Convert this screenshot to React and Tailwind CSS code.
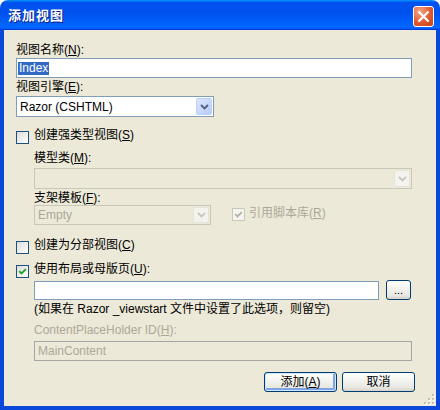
import React from 'react';

// 添加视图 dialog, Windows XP (Luna) look

const Mn = ({ children }) => <span className="underline underline-offset-[1px]">{children}</span>;

const Checkbox = ({ checked, disabled }) => (
  <span
    className={
      disabled
        ? 'mt-[3px] flex h-[13px] w-[13px] shrink-0 items-center justify-center border border-[#CAC8BB] bg-[#F5F4EE]'
        : 'mt-[3px] flex h-[13px] w-[13px] shrink-0 items-center justify-center border border-[#1C5180] bg-[linear-gradient(135deg,#DCDCD7,#FFFFFF)]'
    }
  >
    {checked && (
      <svg width="9" height="9" viewBox="0 0 9 9">
        <path d="M1.2 4.2 L3.5 6.5 L7.8 2.2" fill="none" stroke={disabled ? '#B5B2A3' : '#21A121'} strokeWidth="1.9" />
      </svg>
    )}
  </span>
);

const DropButton = ({ disabled }) => (
  <span
    className={
      disabled
        ? 'flex w-[16px] shrink-0 items-center justify-center rounded-[2px] border border-[#E6E4D9] bg-[#F4F3EE]'
        : 'flex w-[16px] shrink-0 items-center justify-center rounded-[2px] border border-[#BCCFF7] bg-[linear-gradient(135deg,#DCE6FD,#B9CCF6)]'
    }
  >
    <svg width="9" height="6" viewBox="0 0 9 6">
      <path d="M1 1 L4.5 4.5 L8 1" fill="none" stroke={disabled ? '#C9C7BA' : '#4D6185'} strokeWidth="1.8" />
    </svg>
  </span>
);

const Select = ({ value, disabled, className }) => (
  <div
    className={
      (disabled
        ? 'flex items-stretch border border-[#C9C7BA] bg-[#ECE9D8] p-[1px] text-[#ACA899] '
        : 'flex items-stretch border border-[#7F9DB9] bg-white p-[1px] text-black ') + className
    }
  >
    <span className="flex flex-1 items-center pl-[2px] leading-none">{value}</span>
    <DropButton disabled={disabled} />
  </div>
);

const XpButton = ({ children, isDefault, className }) => (
  <button
    className={
      (isDefault
        ? 'flex items-center justify-center rounded-[3px] border border-[#003C74] bg-[linear-gradient(to_bottom,#FFFFFF,#F2F2EE_45%,#E8E7E1_80%,#D8D3C9)] leading-none shadow-[inset_0_0_0_1px_#CEE7FF,inset_-1px_-1px_0_2px_#7FA5E6] '
        : 'flex items-center justify-center rounded-[3px] border border-[#003C74] bg-[linear-gradient(to_bottom,#FFFFFF,#F2F2EE_45%,#E8E7E1_80%,#D8D3C9)] leading-none ') + className
    }
  >
    {children}
  </button>
);

const SizeGrip = () => (
  <svg className="absolute bottom-[1px] right-[1px]" width="12" height="12" viewBox="0 0 12 12">
    {[[9, 1], [5, 5], [9, 5], [1, 9], [5, 9], [9, 9]].map(([x, y]) => (
      <g key={`${x}-${y}`}>
        <rect x={x + 1} y={y + 1} width="2" height="2" fill="#FFFFFF" />
        <rect x={x} y={y} width="2" height="2" fill="#C5C2B2" />
      </g>
    ))}
  </svg>
);

const TitleBar = () => (
  <div className="flex h-[30px] shrink-0 items-start justify-between rounded-t-[8px] bg-[linear-gradient(180deg,#0997FF,#0053EE_8%,#0050EE_40%,#0066FF_88%,#0066FF_93%,#005BFF_95%,#003DD7_96%,#003DD7)] pl-[8px] pr-[6px]">
    <span className="mt-[7px] text-[13px] font-bold leading-[18px] tracking-[1px] text-white [text-shadow:1px_1px_0_#0A1883]">
      添加视图
    </span>
    <span className="mt-[6px] flex h-[21px] w-[21px] items-center justify-center rounded-[3px] border border-white bg-[radial-gradient(circle_at_30%_25%,#F4A48A,#E1592F_55%,#C3401E)]">
      <svg width="11" height="11" viewBox="0 0 11 11">
        <path d="M1.2 1.2 L9.8 9.8 M9.8 1.2 L1.2 9.8" stroke="#FFFFFF" strokeWidth="2.2" strokeLinecap="square" />
      </svg>
    </span>
  </div>
);

export default function App() {
  return (
    <div className="flex h-[410px] w-[440px] flex-col font-['Liberation_Sans','Noto_Sans_CJK_SC',sans-serif] text-[12px] text-black">
      <TitleBar />
      <div className="relative flex flex-1 flex-col border-x-4 border-b-4 border-[#0A48DC] bg-[#ECE9D8] pl-[12px] pr-[24px]">
        <div className="mt-[13px] leading-[14px]">
          视图名称(<Mn>N</Mn>):
        </div>
        <div className="mt-[1px] flex h-[20px] items-center border border-[#7F9DB9] bg-white pl-[1px]">
          <span className="bg-[#316AC5] px-[1px] leading-[13px] text-white">Index</span>
        </div>

        <div className="mt-[2px] leading-[14px]">
          视图引擎(<Mn>E</Mn>):
        </div>
        <Select value="Razor (CSHTML)" className="mt-[2px] h-[21px] w-[198px]" />

        <div className="mt-[11px] flex items-start gap-[5px]">
          <Checkbox />
          <span className="leading-[14px]">
            创建强类型视图(<Mn>S</Mn>)
          </span>
        </div>

        <div className="ml-[18px] mt-[7px] leading-[14px]">
          模型类(<Mn>M</Mn>):
        </div>
        <Select value="" disabled className="ml-[18px] mt-[3px] h-[21px]" />

        <div className="ml-[18px] mt-[2px] leading-[14px]">
          支架模板(<Mn>F</Mn>):
        </div>
        <div className="ml-[18px] flex items-start">
          <Select value="Empty" disabled className="h-[20px] w-[177px]" />
          <div className="ml-[21px] flex items-start gap-[4px] text-[#ACA899]">
            <Checkbox checked disabled />
            <span className="mt-[1px] leading-[14px]">
              引用脚本库(<Mn>R</Mn>)
            </span>
          </div>
        </div>

        <div className="mt-[13px] flex items-start gap-[5px]">
          <Checkbox />
          <span className="leading-[14px]">
            创建为分部视图(<Mn>C</Mn>)
          </span>
        </div>

        <div className="mt-[8px] flex items-start gap-[5px]">
          <Checkbox checked />
          <span className="leading-[14px]">
            使用布局或母版页(<Mn>U</Mn>):
          </span>
        </div>

        <div className="ml-[18px] mt-[2px] flex items-start">
          <div className="mt-[1px] h-[19px] w-[345px] border border-[#7F9DB9] bg-white" />
          <XpButton className="ml-[7px] h-[20px] w-[25px] text-[11px]">...</XpButton>
        </div>

        <div className="ml-[18px] mt-[2px] whitespace-nowrap leading-[14px]">
          (如果在 Razor _viewstart 文件中设置了此选项，则留空)
        </div>

        <div className="ml-[18px] mt-[7px] leading-[14px] text-[#ACA899]">
          ContentPlaceHolder ID(<Mn>H</Mn>):
        </div>
        <div className="ml-[18px] mt-[4px] flex h-[20px] items-center border border-[#A5A5A5] bg-[#ECE9D8] pl-[3px] text-[#ACA899]">
          MainContent
        </div>

        <div className="mr-[-3px] mt-[11px] flex justify-end gap-[5px]">
          <XpButton isDefault className="h-[20px] w-[73px]">
            添加(<Mn>A</Mn>)
          </XpButton>
          <XpButton className="h-[20px] w-[73px]">取消</XpButton>
        </div>

        <SizeGrip />
      </div>
    </div>
  );
}
